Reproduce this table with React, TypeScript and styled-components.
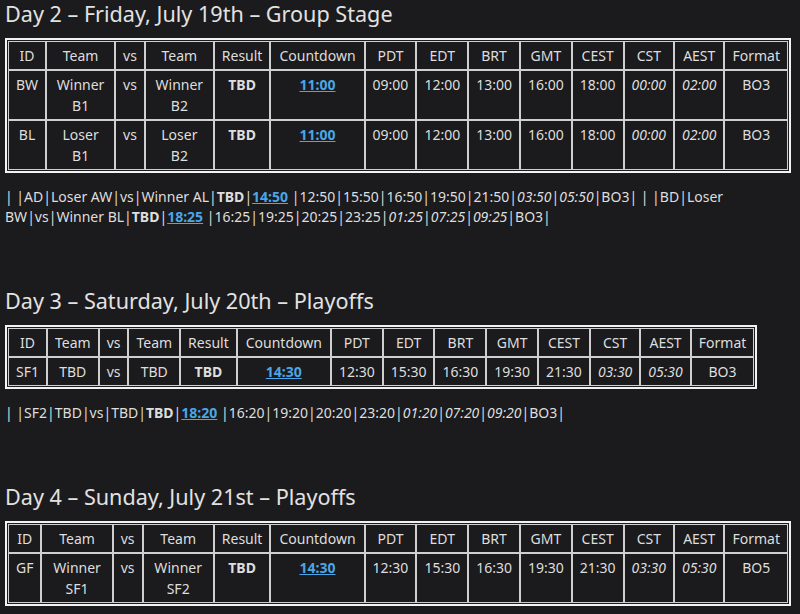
import React from "react";
import styled, { createGlobalStyle } from "styled-components";

const GlobalStyle = createGlobalStyle`
  html, body {
    margin: 0;
    padding: 0;
    background: #1b1a1d;
  }
  body {
    font-family: "Noto Sans", "Open Sans", sans-serif;
    color: #dedede;
    font-size: 14px;
  }
`;

const Page = styled.div`
  width: 786px;
  padding: 0 0 0 5px;
`;

const Section = styled.section`
  & + & {
    margin-top: 60px;
  }
`;

const Heading = styled.h3`
  margin: 0 0 10px;
  font-size: 21.6px;
  line-height: 28px;
  font-weight: 400;
  color: #e2e2e2;
`;

const ScheduleTable = styled.table`
  border-collapse: separate;
  border-spacing: 0;
  border: 2px solid #f2f2f2;
  padding: 1px;
  background: #1b1a1d;
`;

const HeadCell = styled.th<{ $wide?: boolean }>`
  border: 1px solid #cfcfcf;
  padding: 3px ${(p) => (p.$wide ? 8 : 7)}px;
  line-height: 21px;
  font-weight: 400;
  text-align: center;
  vertical-align: top;
  color: #dedede;
`;

const Cell = styled.td<{ $italic?: boolean; $bold?: boolean; $wide?: boolean }>`
  border: 1px solid #cfcfcf;
  padding: 3px ${(p) => (p.$wide ? 8 : 7)}px;
  line-height: 21px;
  text-align: center;
  vertical-align: top;
  font-style: ${(p) => (p.$italic ? "italic" : "normal")};
  font-weight: ${(p) => (p.$bold ? 700 : 400)};
`;

const CountdownLink = styled.a`
  color: #4aa6e6;
  font-weight: 700;
  text-decoration: underline;
`;

const Note = styled.p`
  margin: 14px 0 0;
  line-height: 20px;
`;

const Em = styled.em`
  font-style: italic;
`;

const Strong = styled.strong`
  font-weight: 700;
`;

type Match = {
  id: string;
  team1: string;
  team2: string;
  countdown: string;
  times: string[];
  format: string;
};

const HEADERS = [
  "ID",
  "Team",
  "vs",
  "Team",
  "Result",
  "Countdown",
  "PDT",
  "EDT",
  "BRT",
  "GMT",
  "CEST",
  "CST",
  "AEST",
  "Format",
];

const ITALIC_FROM = 5;

function MatchTable({ rows }: { rows: Match[] }) {
  return (
    <ScheduleTable>
      <thead>
        <tr>
          {HEADERS.map((h, i) => (
            <HeadCell key={i} $wide={h === "Countdown"}>
              {h}
            </HeadCell>
          ))}
        </tr>
      </thead>
      <tbody>
        {rows.map((r) => (
          <tr key={r.id}>
            <Cell>{r.id}</Cell>
            <Cell>{r.team1}</Cell>
            <Cell>vs</Cell>
            <Cell>{r.team2}</Cell>
            <Cell $bold>TBD</Cell>
            <Cell $wide>
              <CountdownLink href="#">{r.countdown}</CountdownLink>
            </Cell>
            {r.times.map((t, i) => (
              <Cell key={i} $italic={i >= ITALIC_FROM}>
                {t}
              </Cell>
            ))}
            <Cell>{r.format}</Cell>
          </tr>
        ))}
      </tbody>
    </ScheduleTable>
  );
}

type Inline = {
  id: string;
  team1: string;
  team2: string;
  countdown: string;
  plain: string[];
  italic: string[];
  format: string;
};

function InlineMatch({ m }: { m: Inline }) {
  return (
    <>
      {"| |"}
      {m.id}|{m.team1}|vs|{m.team2}|<Strong>TBD</Strong>|
      <CountdownLink href="#">{m.countdown}</CountdownLink>
      {" |"}
      {m.plain.map((t, i) => (
        <React.Fragment key={"p" + i}>{t}|</React.Fragment>
      ))}
      {m.italic.map((t, i) => (
        <React.Fragment key={"i" + i}>
          <Em>{t}</Em>|
        </React.Fragment>
      ))}
      {m.format}|
    </>
  );
}

const day2: Match[] = [
  {
    id: "BW",
    team1: "Winner B1",
    team2: "Winner B2",
    countdown: "11:00",
    times: ["09:00", "12:00", "13:00", "16:00", "18:00", "00:00", "02:00"],
    format: "BO3",
  },
  {
    id: "BL",
    team1: "Loser B1",
    team2: "Loser B2",
    countdown: "11:00",
    times: ["09:00", "12:00", "13:00", "16:00", "18:00", "00:00", "02:00"],
    format: "BO3",
  },
];

const day3: Match[] = [
  {
    id: "SF1",
    team1: "TBD",
    team2: "TBD",
    countdown: "14:30",
    times: ["12:30", "15:30", "16:30", "19:30", "21:30", "03:30", "05:30"],
    format: "BO3",
  },
];

const day4: Match[] = [
  {
    id: "GF",
    team1: "Winner SF1",
    team2: "Winner SF2",
    countdown: "14:30",
    times: ["12:30", "15:30", "16:30", "19:30", "21:30", "03:30", "05:30"],
    format: "BO5",
  },
];

const AD: Inline = {
  id: "AD",
  team1: "Loser AW",
  team2: "Winner AL",
  countdown: "14:50",
  plain: ["12:50", "15:50", "16:50", "19:50", "21:50"],
  italic: ["03:50", "05:50"],
  format: "BO3",
};

const BD: Inline = {
  id: "BD",
  team1: "Loser BW",
  team2: "Winner BL",
  countdown: "18:25",
  plain: ["16:25", "19:25", "20:25", "23:25"],
  italic: ["01:25", "07:25", "09:25"],
  format: "BO3",
};

const SF2: Inline = {
  id: "SF2",
  team1: "TBD",
  team2: "TBD",
  countdown: "18:20",
  plain: ["16:20", "19:20", "20:20", "23:20"],
  italic: ["01:20", "07:20", "09:20"],
  format: "BO3",
};

export default function App() {
  return (
    <>
      <GlobalStyle />
      <Page>
        <Section>
          <Heading>Day 2 – Friday, July 19th – Group Stage</Heading>
          <MatchTable rows={day2} />
          <Note>
            <InlineMatch m={AD} /> <InlineMatch m={BD} />
          </Note>
        </Section>
        <Section>
          <Heading>Day 3 – Saturday, July 20th – Playoffs</Heading>
          <MatchTable rows={day3} />
          <Note>
            <InlineMatch m={SF2} />
          </Note>
        </Section>
        <Section>
          <Heading>Day 4 – Sunday, July 21st – Playoffs</Heading>
          <MatchTable rows={day4} />
        </Section>
      </Page>
    </>
  );
}
